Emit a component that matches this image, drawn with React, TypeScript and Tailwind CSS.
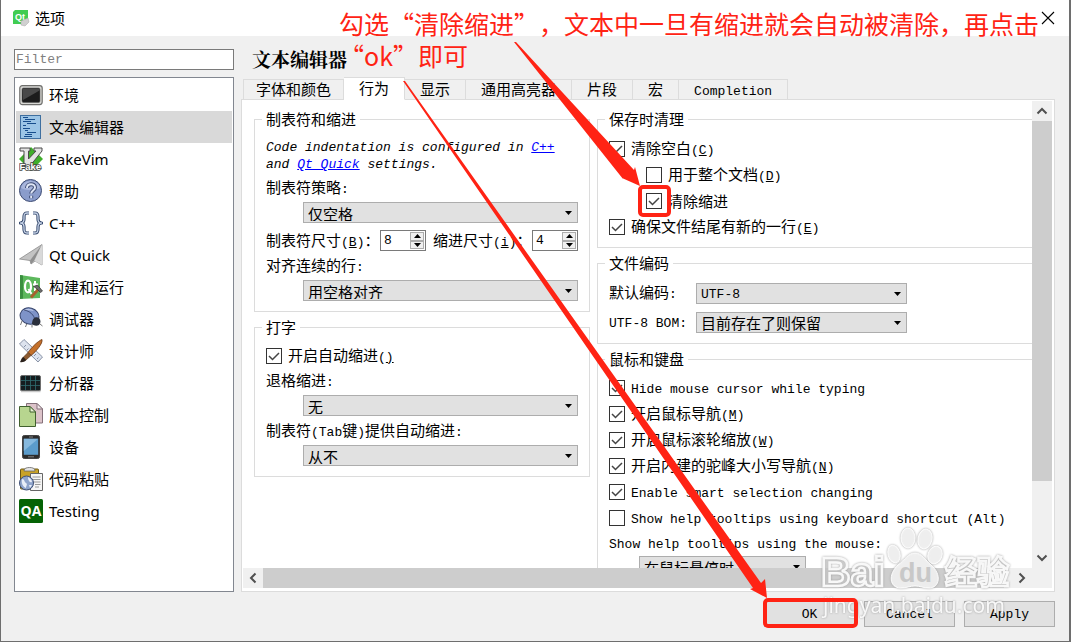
import { useState } from 'react'
import type { ReactNode } from 'react'

/* ---------- text ---------- */

// Latin runs are set in the monospaced face, everything else keeps the CJK one
function Txt({ children }: { children: string }) {
  const runs = children.match(/[\x20-\x7e]+|[^\x20-\x7e]+/g) ?? []
  return (
    <span className="whitespace-pre">
      {runs.map((run, i) =>
        /^[\x20-\x7e]/.test(run) ? (
          <span key={i} className="font-['Liberation_Mono',monospace] text-[13px]">
            {run}
          </span>
        ) : (
          run
        ),
      )}
    </span>
  )
}

// Mnemonic such as (B), with the key underlined
function Key({ children }: { children: string }) {
  return (
    <span className="font-['Liberation_Mono',monospace] text-[13px]">
      (<u>{children}</u>)
    </span>
  )
}

/* ---------- sidebar icons ---------- */

const icons: Record<string, ReactNode> = {
  env: (
    <>
      <rect x="0.8" y="2.6" width="22.4" height="19" rx="2.5" fill="#d8d8d4" stroke="#6e6e6c" strokeWidth="1.2" />
      <rect x="3" y="5" width="18" height="14.4" rx="1.5" fill="#1c1c1c" stroke="#555" strokeWidth="0.6" />
      <path d="M3.5 5.5h17v2L4 17z" fill="#5c5c5c" opacity="0.7" />
    </>
  ),
  editor: (
    <>
      <rect x="1.5" y="0.5" width="20" height="23" fill="#9cc5e6" stroke="#3f6f9f" />
      <path d="M4 2.5h5M6 4.500h10M4 6.500h8M8 8.500h9M4 10.500h3M4 13.500h7M6 15.500h3M8 17.500h9M6 19.500h7M5 21.500h8" stroke="#174d8c" strokeWidth="1.1" />
    </>
  ),
  vim: (
    <>
      <path d="M12 0l12 12-12 12L0 12z" fill="#3fae2a" />
      <path d="M1 1h10v3H9.500v8L17 4h-2V1h8v3L11 19H5V4H1z" fill="#e4e4e4" stroke="#4a4a4a" strokeWidth="1" />
      <text x="0.500" y="22.500" fontFamily="Liberation Sans" fontSize="9.500" fontWeight="bold" fill="#fff" stroke="#444" strokeWidth="1.600" paintOrder="stroke">Fake</text>
    </>
  ),
  help: (
    <>
      <circle cx="11.500" cy="11.500" r="11" fill="#8a9ccb" stroke="#3e4c73" />
      <path d="M2 9a10 10 0 0119 0C15 12 8 12 2 9z" fill="#b5c1e2" opacity="0.7" />
      <path d="M8 9c0-5 8-5 8-.5 0 3-3.800 3-3.800 6M12.200 16.800v2.400" fill="none" stroke="#3e4c73" strokeWidth="4" />
      <path d="M8 9c0-5 8-5 8-.5 0 3-3.800 3-3.800 6M12.200 16.800v2.400" fill="none" stroke="#dfe6f6" strokeWidth="2" />
    </>
  ),
  cpp: (
    <g fill="none" strokeLinejoin="round">
      <path d="M10 2H8C5 2 5 4 5 6v2c0 2-1 4-3.500 4C4 12 5 14 5 16v2c0 2 0 4 3 4h2M14 2h2c3 0 3 2 3 4v2c0 2 1 4 3.500 4-2.500 0-3.500 2-3.500 4v2c0 2 0 4-3 4h-2" stroke="#33476b" strokeWidth="3.200" />
      <path d="M10 2H8C5 2 5 4 5 6v2c0 2-1 4-3.500 4C4 12 5 14 5 16v2c0 2 0 4 3 4h2M14 2h2c3 0 3 2 3 4v2c0 2 1 4 3.500 4-2.500 0-3.500 2-3.500 4v2c0 2 0 4-3 4h-2" stroke="#c8d4e8" strokeWidth="1.300" />
    </g>
  ),
  quick: (
    <>
      <path d="M0.500 16L23 1.500V22l-7-4-4 3-1-3.500z" fill="#c3c3c3" stroke="#8b8b8b" strokeWidth="0.800" />
      <path d="M23 1.500L11 17.500l1 3.500 3-3.200z" fill="#8f8f8f" />
      <path d="M23 1.500L15.500 18 23 22z" fill="#d9d9d9" />
    </>
  ),
  build: (
    <>
      <path d="M1 0l20 3v20L1 24z" fill="#5cb85c" />
      <path d="M1 0l3 .5v23L1 24z" fill="#3a8f3f" />
      <ellipse cx="9" cy="11.500" rx="3" ry="5.800" fill="none" stroke="#fff" strokeWidth="2.200" />
      <path d="M9.500 14l3 5M16 6v10M14 9.500h5" stroke="#fff" strokeWidth="2" />
      <path d="M12 22.500l8-9" stroke="#a8612f" strokeWidth="2.800" />
      <path d="M14.500 11.500l4-1.500 5 6-2 1.500-4-4z" fill="#6b6b6b" stroke="#333" strokeWidth="0.700" />
    </>
  ),
  debug: (
    <>
      <path d="M3 14l-1.500 4M8 16l-1.500 4M13 18v2.500M21 17l2.500 2" stroke="#777" strokeWidth="1" />
      <ellipse cx="10.500" cy="9" rx="9.500" ry="8" fill="#7e93c8" stroke="#35436a" transform="rotate(15 10.500 9)" />
      <path d="M4 4c3-3 8-3 11 0-4-1-8-1-11 0z" fill="#b9c5e6" />
      <path d="M5 3c6 1 10 5 11 10" fill="none" stroke="#35436a" strokeWidth="0.900" />
      <path d="M13 17c0-5 3-8 7-6 2 2 2 5 0 7-2 1-5 1-7-1z" fill="#2a2f3c" />
    </>
  ),
  design: (
    <>
      <path d="M0.500 5L5 0.500 23.500 18 19 23z" fill="#dde3ee" stroke="#8791a5" />
      <path d="M5 8l2-2M8 11l1.500-1.500M15 17l2-2M18 20l1.500-1.500" stroke="#8791a5" />
      <path d="M23 0.500c1 4-6 12-11 16l-3-3C13 8 19 2 23 0.500z" fill="#c4702a" stroke="#6b3510" strokeWidth="0.800" />
      <path d="M12 16.500l-3-3-5 5 2.500 3z" fill="#8d5a30" stroke="#4f2f16" strokeWidth="0.600" />
      <path d="M1 23c1-1 1-4 3.500-5l2.500 3c-1 2-4 2.500-6 2z" fill="#2b211b" />
    </>
  ),
  analyze: (
    <>
      <rect x="1.500" y="4.500" width="20" height="15.500" rx="1.500" fill="#151d1f" stroke="#6e6e6e" />
      <path d="M6.500 5v14M11.500 5v14M16.500 5v14M2 9.500h19M2 14.500h19" stroke="#2e6c70" strokeWidth="0.800" />
      <path d="M2 20.500h19.500" stroke="#c9c9c9" strokeWidth="1.500" />
    </>
  ),
  vcs: (
    <>
      <path d="M7.500 0.500H18l5.500 5.500v14H7.500z" fill="#dcc3c9" stroke="#84707a" />
      <path d="M18 0.500V6h5.500z" fill="#f3e8ea" stroke="#84707a" />
      <path d="M0.500 3.500H11L16.500 9v14.500H0.500z" fill="#b7d58f" stroke="#41602f" />
      <path d="M11 3.500V9h5.500z" fill="#e7f2d3" stroke="#41602f" />
    </>
  ),
  device: (
    <>
      <rect x="3.500" y="0.500" width="17" height="23" rx="1.800" fill="#2c2c2c" stroke="#444" />
      <rect x="4.800" y="3.800" width="14.400" height="16" fill="#5b9ccb" />
      <path d="M4.800 3.800h14.400L4.800 16z" fill="#86b9de" />
      <path d="M10 2h4M9 21.800h6" stroke="#999" strokeWidth="0.800" />
    </>
  ),
  paste: (
    <>
      <rect x="1.500" y="2" width="18" height="20" rx="1" fill="#c9a227" stroke="#6b5714" />
      <path d="M5 4c0-3 3-3.500 5.500-3.500S16 1 16 4z" fill="#e4e4e4" stroke="#666" strokeWidth="0.800" />
      <path d="M11.500 6.500h12v17h-12z" fill="#f5f5f5" stroke="#666" />
      <path d="M13.500 10h8M13.500 12.500h8M13.500 15h8M16 17.500h5.500M16 20h4" stroke="#999" />
      <circle cx="7.500" cy="16" r="7" fill="#8fa4cb" stroke="#3f5075" />
      <path d="M3 12c3 0 2 3 4 4s0 3 0 5c-3-1-5-5-4-9zM9 10c2 1 4 3 4 5-2 1-4-1-4-5zM10 18l3 0-2 3z" fill="#e9eef8" />
    </>
  ),
  testing: (
    <>
      <rect width="24" height="24" rx="1.500" fill="#056305" />
      <text x="12" y="17" textAnchor="middle" fontFamily="Open Sans, sans-serif" fontSize="14" fontWeight="bold" fill="#fff">QA</text>
    </>
  ),
}

const categories = [
  { icon: 'env', name: '环境' },
  { icon: 'editor', name: '文本编辑器' },
  { icon: 'vim', name: 'FakeVim' },
  { icon: 'help', name: '帮助' },
  { icon: 'cpp', name: 'C++' },
  { icon: 'quick', name: 'Qt Quick' },
  { icon: 'build', name: '构建和运行' },
  { icon: 'debug', name: '调试器' },
  { icon: 'design', name: '设计师' },
  { icon: 'analyze', name: '分析器' },
  { icon: 'vcs', name: '版本控制' },
  { icon: 'device', name: '设备' },
  { icon: 'paste', name: '代码粘贴' },
  { icon: 'testing', name: 'Testing' },
]

const tabs = ['字体和颜色', '行为', '显示', '通用高亮器', '片段', '宏', 'Completion']

/* ---------- controls ---------- */

function Group({ title, open, children }: { title: string; open?: boolean; children: ReactNode }) {
  return (
    <fieldset className={`min-w-0 border border-[#dcdcdc] px-[11px] pb-2.5 ${open ? 'border-r-0' : ''}`}>
      <legend className="-ml-1 h-5 px-1 leading-5">{title}</legend>
      {children}
    </fieldset>
  )
}

function Check({ checked, indent, children }: { checked?: boolean; indent?: boolean; children: ReactNode }) {
  return (
    <label className={`flex h-5 items-center gap-1.5 whitespace-nowrap leading-5 ${indent ? 'ml-[37px]' : ''}`}>
      <span className="grid shrink-0">
        <input
          type="checkbox"
          defaultChecked={checked}
          className="peer col-start-1 row-start-1 size-4 appearance-none border border-[#333] bg-white"
        />
        <svg viewBox="0 0 16 16" className="pointer-events-none invisible col-start-1 row-start-1 size-4 peer-checked:visible">
          <path d="M3 8l3.500 3.500L13 5" fill="none" stroke="#444" strokeWidth="1.500" />
        </svg>
      </span>
      <span>{children}</span>
    </label>
  )
}

function Combo({ id, options, className }: { id: string; options: string[]; className: string }) {
  const latin = /^[\x20-\x7e]+$/.test(options[0])
  return (
    <span className={`grid h-[21px] ${className}`}>
      <select
        id={id}
        className={`col-start-1 row-start-1 h-[21px] w-full appearance-none border border-[#adadad] bg-[#e1e1e1] pl-1 ${
          latin ? "pt-px font-['Liberation_Mono',monospace] text-[13px]" : 'pb-px'
        }`}
      >
        {options.map((o) => (
          <option key={o}>{o}</option>
        ))}
      </select>
      <svg viewBox="0 0 7 4" className="pointer-events-none col-start-1 row-start-1 mr-1.5 h-1 w-[7px] self-center justify-self-end">
        <path d="M0 0h7L3.500 4z" />
      </svg>
    </span>
  )
}

function Field({ id, label, options }: { id: string; label: string; options: string[] }) {
  return (
    <div className="mt-1">
      <label htmlFor={id} className="block h-5 leading-5">
        <Txt>{label}</Txt>
      </label>
      <Combo id={id} options={options} className="mt-[5px] ml-[37px]" />
    </div>
  )
}

function Spin({ id, value }: { id: string; value: number }) {
  const [n, setN] = useState(value)
  return (
    <span className="flex h-[21px] w-[46px] shrink-0 border border-[#7a7a7a] bg-white p-px">
      <input
        id={id}
        value={n}
        onChange={(e) => setN(Number(e.target.value) || 0)}
        className="w-full min-w-0 pl-0.5 font-['Liberation_Mono',monospace] text-[13px] outline-none"
      />
      <span className="flex w-3.5 shrink-0 flex-col">
        <button aria-label="增加" onClick={() => setN(n + 1)} className="grid flex-1 place-items-center border border-[#adadad] bg-[#f0f0f0]">
          <svg viewBox="0 0 7 4" className="h-1 w-[7px]">
            <path d="M0 4h7L3.500 0z" />
          </svg>
        </button>
        <button aria-label="减少" onClick={() => setN(n - 1)} className="grid flex-1 place-items-center border border-[#adadad] bg-[#f0f0f0]">
          <svg viewBox="0 0 7 4" className="h-1 w-[7px]">
            <path d="M0 0h7L3.500 4z" />
          </svg>
        </button>
      </span>
    </span>
  )
}

function ScrollButton({ label, d }: { label: string; d: string }) {
  return (
    <button aria-label={label} className="grid size-5 shrink-0 place-items-center">
      <svg viewBox="0 0 12 12" className="size-3">
        <path d={d} fill="none" stroke="#505050" strokeWidth="2" />
      </svg>
    </button>
  )
}

function DialogButton({ children }: { children: string }) {
  return (
    <button className="h-[26px] w-[91px] border border-[#adadad] bg-[#e1e1e1] pt-0.5 font-['Liberation_Mono',monospace] text-[13px]">
      {children}
    </button>
  )
}

/* ---------- panels ---------- */

function Sidebar() {
  const [current, setCurrent] = useState('editor')
  return (
    <div className="flex w-[220px] shrink-0 flex-col gap-[7px]">
      <input
        aria-label="Filter"
        placeholder="Filter"
        className="h-[21px] shrink-0 border border-[#7a7a7a] bg-white px-px font-['Liberation_Mono',monospace] text-[13px] outline-none placeholder:text-[#808080]"
      />
      <ul className="min-h-0 flex-1 overflow-hidden border border-[#828790] bg-white p-px">
        {categories.map((c) => (
          <li key={c.icon}>
            <button
              onClick={() => setCurrent(c.icon)}
              className={`flex h-8 w-full items-center gap-1.5 pl-[3px] text-left font-['Noto_Sans','Noto_Sans_CJK_SC',sans-serif] ${
                current === c.icon ? 'bg-[#d9d9d9]' : ''
              }`}
            >
              <svg viewBox="0 0 24 24" className="size-6 shrink-0">
                {icons[c.icon]}
              </svg>
              {c.name}
            </button>
          </li>
        ))}
      </ul>
    </div>
  )
}

function BehaviorPage() {
  return (
    <div className="flex gap-[7px] pt-[9px] pl-3">
      <div className="flex w-[336px] shrink-0 flex-col gap-[5px]">
        <Group title="制表符和缩进">
          <p className="mt-2.5 font-['Liberation_Mono',monospace] text-[13px] leading-[17px] italic">
            Code indentation is configured in{' '}
            <a href="#cpp" className="text-[#0000ff] underline">C++</a> and{' '}
            <a href="#qtquick" className="text-[#0000ff] underline">Qt Quick</a> settings.
          </p>
          <Field id="policy" label="制表符策略:" options={['仅空格']} />
          <div className="mt-[7px] flex h-[21px] items-center whitespace-nowrap">
            <label htmlFor="tabsize" className="w-[114px]">
              制表符尺寸<Key>B</Key>：
            </label>
            <Spin id="tabsize" value={8} />
            <label htmlFor="indentsize" className="ml-[7px] flex-1">
              缩进尺寸<Key>i</Key>：
            </label>
            <Spin id="indentsize" value={4} />
          </div>
          <Field id="align" label="对齐连续的行:" options={['用空格对齐']} />
        </Group>
        <Group title="打字">
          <div className="mt-[9px]">
            <Check checked>
              开启自动缩进
              <span className="font-['Liberation_Mono',monospace] text-[13px]">
                (<u>)</u>
              </span>
            </Check>
          </div>
          <Field id="backspace" label="退格缩进:" options={['无']} />
          <Field id="tabkey" label="制表符(Tab键)提供自动缩进:" options={['从不']} />
        </Group>
      </div>

      <div className="flex min-w-0 flex-1 flex-col gap-[5px]">
        <Group title="保存时清理" open>
          <div className="mt-2.5 flex flex-col gap-1.5">
            <Check checked>清除空白<Key>C</Key></Check>
            <Check indent>用于整个文档<Key>D</Key></Check>
            <Check indent checked>清除缩进</Check>
            <Check checked>确保文件结尾有新的一行<Key>E</Key></Check>
          </div>
        </Group>
        <Group title="文件编码" open>
          <div className="mt-2.5 grid auto-rows-[21px] grid-cols-[87px_211px] items-center gap-y-2 leading-5">
            <label htmlFor="encoding"><Txt>默认编码:</Txt></label>
            <Combo id="encoding" options={['UTF-8']} className="" />
            <label htmlFor="bom"><Txt>UTF-8 BOM:</Txt></label>
            <Combo id="bom" options={['目前存在了则保留']} className="" />
          </div>
        </Group>
        <Group title="鼠标和键盘" open>
          <div className="mt-[9px] flex flex-col gap-1.5">
            <Check checked><Txt>Hide mouse cursor while typing</Txt></Check>
            <Check checked>开启鼠标导航<Key>M</Key></Check>
            <Check checked>开启鼠标滚轮缩放<Key>W</Key></Check>
            <Check checked>开启内建的驼峰大小写导航<Key>N</Key></Check>
            <Check checked><Txt>Enable smart selection changing</Txt></Check>
            <Check><Txt>Show help tooltips using keyboard shortcut (Alt)</Txt></Check>
          </div>
          <label htmlFor="tooltips" className="mt-1 block h-5 leading-5">
            <Txt>Show help tooltips using the mouse:</Txt>
          </label>
          <Combo id="tooltips" options={['在鼠标悬停时']} className="mt-1 ml-[30px] w-[167px]" />
        </Group>
      </div>
    </div>
  )
}

function Settings() {
  const [tab, setTab] = useState('行为')
  return (
    <div className="flex min-w-0 flex-1 flex-col">
      <h1 className="h-7 shrink-0 pl-[11px] font-['Noto_Serif_CJK_SC','Noto_Sans_CJK_SC',serif] text-[19px] leading-5 font-bold">文本编辑器</h1>
      <div role="tablist" className="z-10 -mb-px flex h-[23px] shrink-0 items-end pl-0.5">
        {tabs.map((t, i) => (
          <button
            key={t}
            role="tab"
            aria-selected={tab === t}
            onClick={() => setTab(t)}
            className={`border border-[#dcdcdc] pb-0.5 leading-[17px] whitespace-nowrap ${i === 0 ? 'px-3' : 'px-[15px]'} ${i > 0 ? 'border-l-0' : ''} ${
              tab === t ? 'h-[23px] border-b-white bg-white' : 'h-[21px] bg-[#f0f0f0]'
            }`}
          >
            <Txt>{t}</Txt>
          </button>
        ))}
      </div>
      <div role="tabpanel" className="flex min-h-0 flex-1 flex-col border border-[#dcdcdc] bg-white pr-0.5 pb-[3px]">
        <div className="flex min-h-0 flex-1">
          <div className="min-w-0 flex-1 overflow-hidden">
            <BehaviorPage />
          </div>
          <div className="mt-px flex w-5 shrink-0 flex-col bg-[#f0f0f0]">
            <ScrollButton label="向上滚动" d="M1.500 8.500L6 4l4.500 4.500" />
            <div className="min-h-0 flex-[358] bg-[#cdcdcd]" />
            <div className="min-h-0 flex-[67]" />
            <ScrollButton label="向下滚动" d="M1.500 3.500L6 8l4.500-4.500" />
          </div>
        </div>
        <div className="ml-px flex h-5 shrink-0 bg-[#f0f0f0] pr-5">
          <ScrollButton label="向左滚动" d="M8.500 1.500L4 6l4.500 4.500" />
          <div className="min-w-0 flex-[740] bg-[#cdcdcd]" />
          <div className="min-w-0 flex-[8]" />
          <ScrollButton label="向右滚动" d="M3.500 1.500L8 6l-4.500 4.500" />
        </div>
      </div>
    </div>
  )
}

/* ---------- annotations lying over the dialog ---------- */

function Annotations() {
  return (
    <div className="pointer-events-none absolute inset-0 z-20 overflow-hidden">
      <svg viewBox="1 0 1071 642" className="absolute top-0 left-0 h-[642px] w-[1071px]">
        <g fill="#d4d4d4" fillOpacity="0.6" stroke="#fff" strokeOpacity="0.9" strokeWidth="2.500" className="drop-shadow-[0_0_1px_#999]">
          <text x="821" y="586" fontFamily="Liberation Sans, sans-serif" fontSize="41" fontWeight="bold">Bai</text>
          <g fill="#fff" fillOpacity="0.8" strokeWidth="1">
            <ellipse cx="894" cy="554" rx="6" ry="9" transform="rotate(-15 894 554)" />
            <ellipse cx="908" cy="538" rx="7" ry="10" />
            <ellipse cx="925" cy="539" rx="7" ry="10" transform="rotate(12 925 539)" />
            <ellipse cx="935" cy="555" rx="7" ry="9" transform="rotate(20 935 555)" />
            <path d="M915 553c7 0 10 7 16 12 11 9 9 23-2 23-6 0-9-2-14-2s-8 2-14 2c-12 0-13-14-3-23 7-5 10-12 17-12z" />
          </g>
          <text x="945" y="584" fontFamily="Noto Sans CJK SC, sans-serif" fontSize="32" fontWeight="bold">经验</text>
        </g>
        <text x="899" y="582" fontFamily="Liberation Sans, sans-serif" fontSize="27" fontWeight="bold" fill="#c8c8c8">du</text>
        <text x="823" y="613" fontFamily="Noto Sans, sans-serif" fontSize="21" fill="#fff" fillOpacity="0.9" className="drop-shadow-[0_0_1px_#999]">jingyan.baidu.com</text>

        <g fill="#ff2314">
          <path d="M514 42L516 42L634 170l1-3 5 19-18-8 1 1z" />
          <path d="M403 81L405 81L761 583l4-4 2 19-17-9 3-1z" />
        </g>
        <g fill="none" stroke="#ff2314" strokeWidth="4">
          <rect x="640" y="187" width="29" height="28" rx="3" />
          <rect x="765" y="600" width="91" height="26" rx="3" />
        </g>
      </svg>
      <p className="absolute top-[7px] left-[338px] text-[25px] leading-8 whitespace-nowrap text-[#ff2314] [text-spacing-trim:space-all]">
        勾选“清除缩进”，文本中一旦有缩进就会自动被清除，再点击
        <br />
        “ok”即可
      </p>
    </div>
  )
}

export default function App() {
  return (
    <div className="relative flex h-screen w-full flex-col border-r-2 border-b border-l border-[#6e6e6e] bg-[#f0f0f0] font-['Noto_Sans_CJK_SC',sans-serif] text-[15px] text-black">
      <header className="flex h-9 shrink-0 items-center bg-white pr-3.5 pl-[11px]">
        <svg viewBox="0 0 18 18" className="size-[18px]">
          <path d="M3 1h13v10l-4 4H1V3z" fill="#41cd52" />
          <text x="3" y="11" fontFamily="Liberation Sans" fontSize="9" fontWeight="bold" fill="#fff">Qt</text>
          <path d="M9 12l7-3 1 4-4 4-4-1z" fill="#d0d0d0" stroke="#a5a5a5" strokeWidth="0.500" />
        </svg>
        <span className="ml-[5px] flex-1 leading-5">选项</span>
        <button aria-label="关闭">
          <svg viewBox="0 0 14 14" className="size-3.5">
            <path d="M1 1l12 12M13 1L1 13" stroke="#000" strokeWidth="1.100" />
          </svg>
        </button>
      </header>
      <main className="flex min-h-0 flex-1 flex-col gap-[9px] pt-[13px] pr-3.5 pb-3.5 pl-[13px]">
        <div className="flex min-h-0 flex-1 gap-[7px]">
          <Sidebar />
          <Settings />
        </div>
        <div className="flex shrink-0 justify-end gap-[9px]">
          <DialogButton>OK</DialogButton>
          <DialogButton>Cancel</DialogButton>
          <DialogButton>Apply</DialogButton>
        </div>
      </main>
      <Annotations />
    </div>
  )
}
